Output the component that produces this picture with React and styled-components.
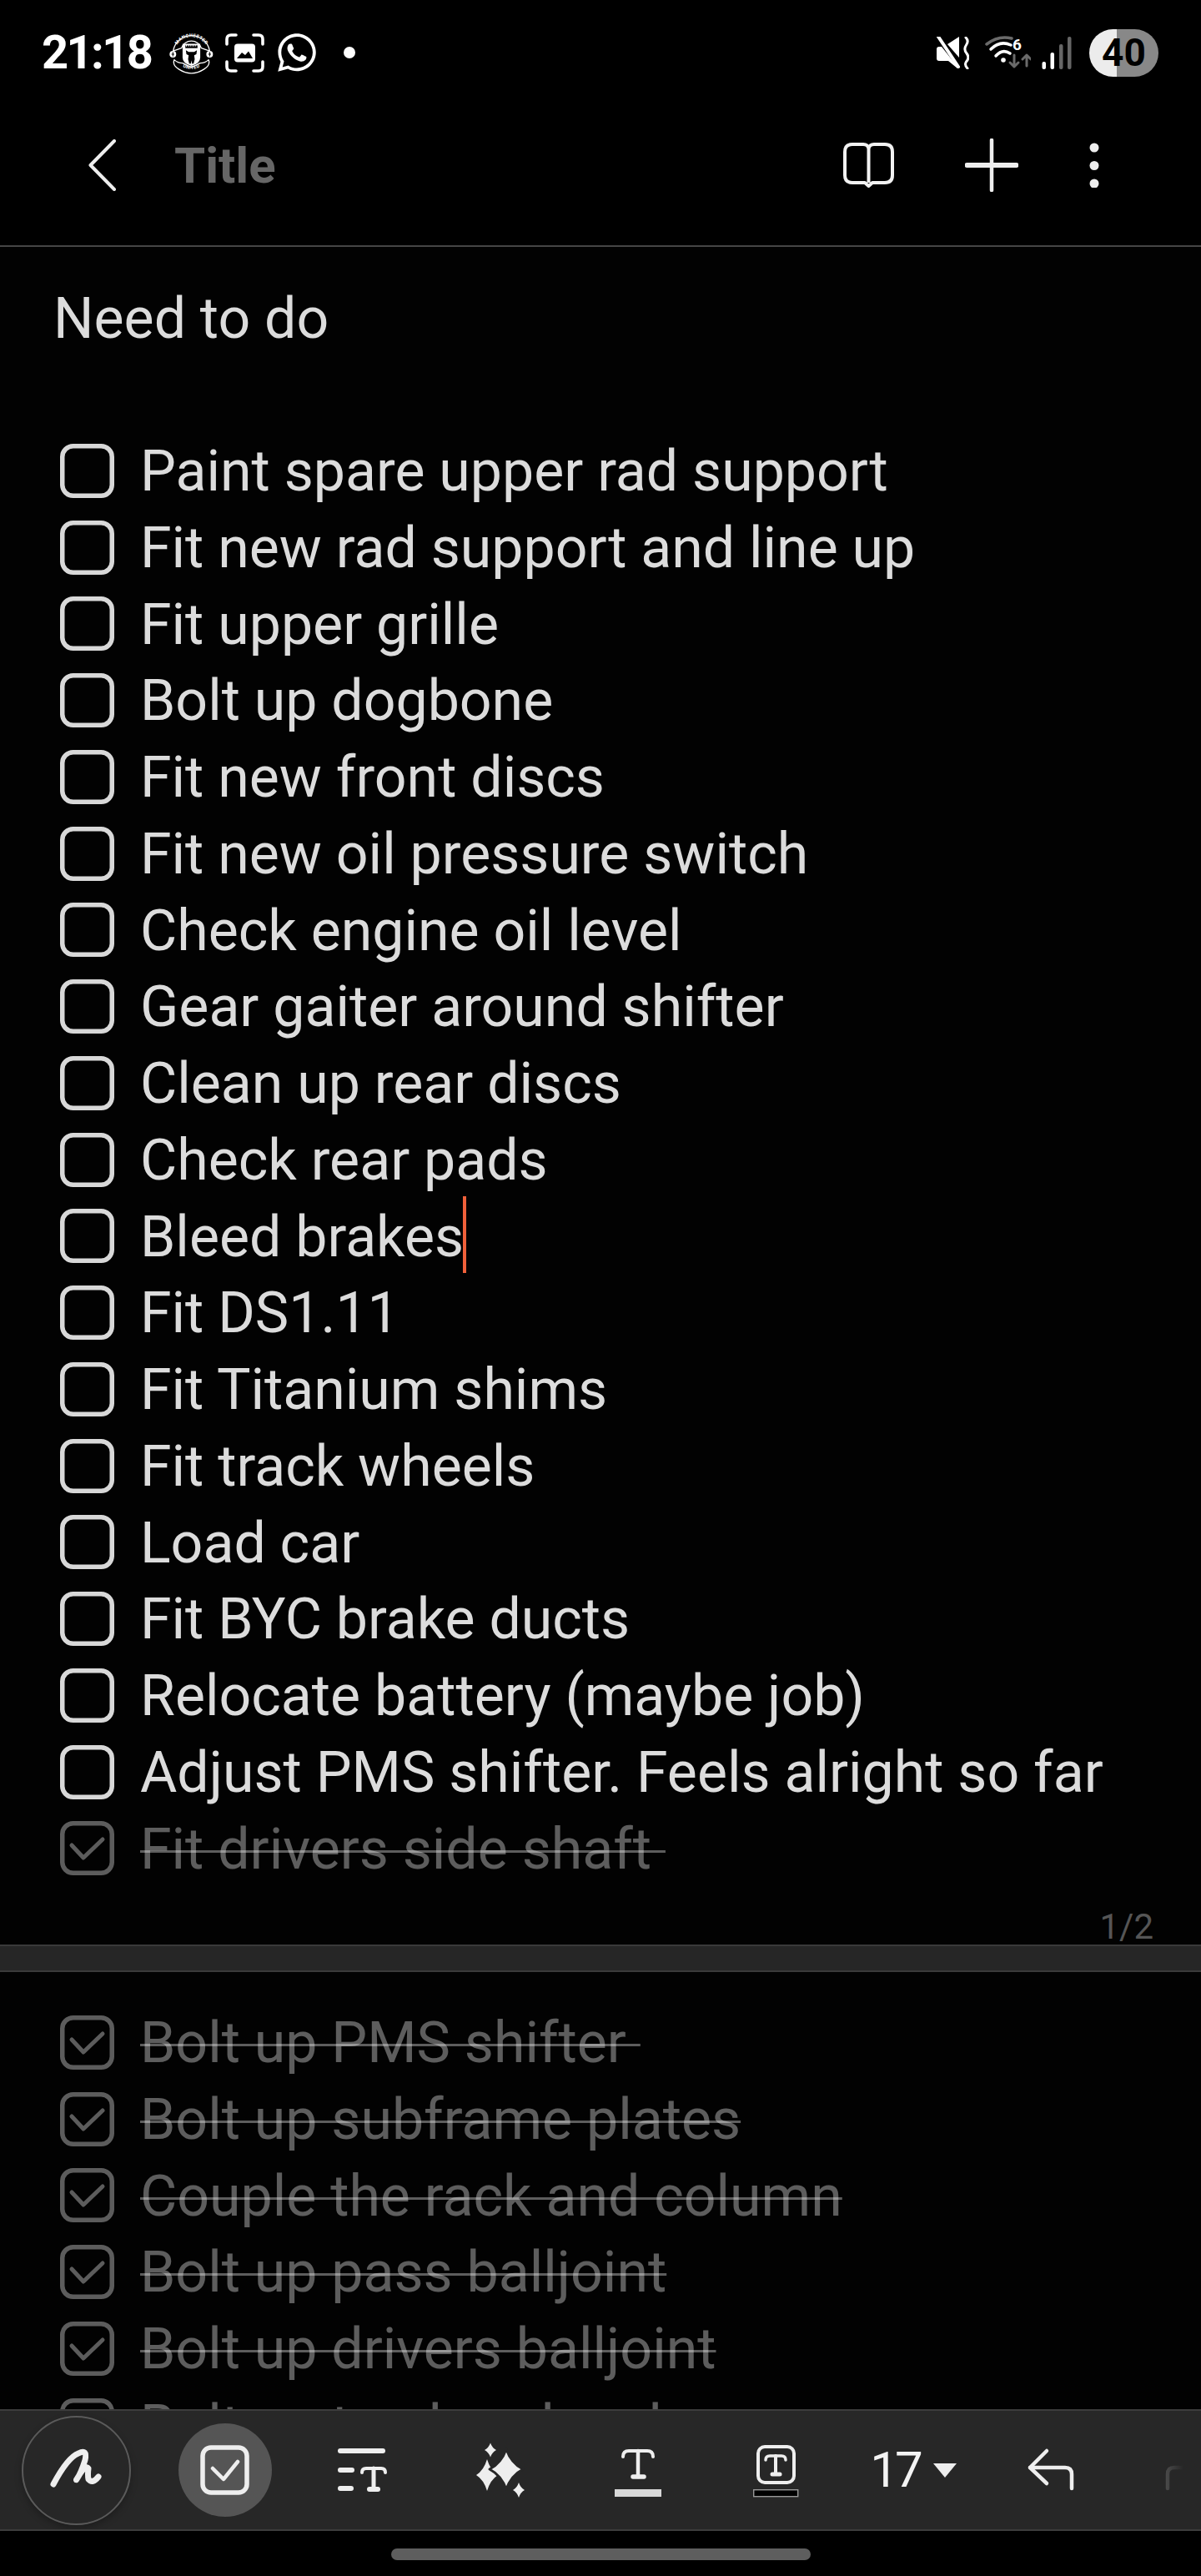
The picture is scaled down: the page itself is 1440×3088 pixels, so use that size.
import React from "react";
import styled, { createGlobalStyle } from "styled-components";
import { FaWhatsapp } from "react-icons/fa";

const Global = createGlobalStyle`
  html, body { margin: 0; padding: 0; background: #000; }
  * { box-sizing: border-box; }
`;

const Phone = styled.div`
  width: 1440px;
  height: 3088px;
  background: #000;
  display: flex;
  flex-direction: column;
  overflow: hidden;
  font-family: Roboto, "Liberation Sans", sans-serif;
`;

const StatusBar = styled.div`
  height: 126px;
  flex: none;
  display: flex;
  align-items: center;
  padding: 0 51px 0 50px;
  color: #fff;
`;
const Time = styled.div`
  width: 139px;
  font-size: 56px;
  letter-spacing: -2.6px;
  line-height: 1;
  font-weight: 700;
`;
const StatusLeft = styled.div`
  display: flex;
  align-items: center;
  gap: 14px;
  flex: 1;
`;
const WhatsApp = styled(FaWhatsapp)`
  margin: 0 -1px;
  color: #fff;
`;
const StatusDot = styled.div`
  width: 14px;
  height: 14px;
  border-radius: 50%;
  background: #fff;
  margin-left: 17px;
`;
const StatusRight = styled.div`
  display: flex;
  align-items: center;
`;
const Battery = styled.div`
  width: 83px;
  height: 57px;
  margin-left: 20px;
  border-radius: 29px;
  background: linear-gradient(90deg, #ececec 0 33px, #888 33px 100%);
  color: #000;
  font-size: 46px;
  font-weight: 700;
  line-height: 57px;
  text-align: center;
`;

const Header = styled.div`
  height: 170px;
  flex: none;
  display: flex;
  align-items: center;
  padding: 0 122px 24px 106px;
  border-bottom: 2px solid #454545;
`;
const Title = styled.div`
  flex: 1;
  margin-left: 70px;
  padding-top: 2px;
  font-size: 60px;
  line-height: 1;
  font-weight: 700;
  color: #666;
`;
const HeaderActions = styled.div`
  display: flex;
  align-items: center;
  gap: 85px;
`;

const Editor = styled.div`
  flex: 1;
  min-height: 0;
  overflow: hidden;
  background: #020202;
`;
const Page = styled.div`
  height: ${(p) => (p.$first ? "2035px" : "auto")};
  padding: ${(p) => (p.$first ? "39px" : "38.6px")} 0 0 62px;
  display: flex;
  flex-direction: column;
`;
const Line = styled.div`
  height: 91.76px;
  padding: 1.5px 0 0 2px;
  font-size: 68px;
  line-height: 91.76px;
  color: #dcdcdc;
  white-space: pre;
`;
const Row = styled.div`
  height: 91.76px;
  display: flex;
  align-items: center;
  padding-left: 10px;
`;
const BoxIcon = styled.svg`
  width: 65px;
  height: 65px;
  flex: none;
  margin-right: 31px;
  color: ${(p) => (p.$done ? "#5c5c5c" : "#d8d8d8")};
`;
const RowText = styled.span`
  padding-top: 3px;
  font-size: 68px;
  line-height: 91.76px;
  white-space: pre;
  color: ${(p) => (p.$done ? "rgba(255,255,255,.36)" : "#dcdcdc")};
  text-decoration: ${(p) => (p.$done ? "line-through" : "none")};
  text-decoration-thickness: 3px;
`;
const Caret = styled.span`
  position: relative;
  display: inline-block;
  width: 0;
  height: 0;
  &::after {
    content: "";
    position: absolute;
    left: -1px;
    top: -72px;
    width: 4px;
    height: 92px;
    background: #f0603a;
  }
`;
const PageNum = styled.div`
  margin-top: auto;
  align-self: flex-end;
  padding-right: 57px;
  font-size: 42px;
  line-height: 42px;
  color: #555;
`;
const PageBreak = styled.div`
  height: 33px;
  background: #262626;
  border-top: 2px solid #3a3a3a;
  border-bottom: 2px solid #3a3a3a;
`;

const Toolbar = styled.div`
  position: relative;
  height: 146px;
  flex: none;
  display: flex;
  align-items: center;
  padding-left: 8.5px;
  background: #272727;
  border-top: 2px solid #3c3c3c;
  border-bottom: 2px solid #3c3c3c;
  overflow: hidden;
  &::after {
    content: "";
    position: absolute;
    top: 0;
    bottom: 0;
    right: 0;
    width: 42px;
    background: linear-gradient(90deg, rgba(39, 39, 39, 0), #272727 50%);
  }
`;
const ToolSlot = styled.div`
  width: 165px;
  flex: none;
  display: flex;
  justify-content: center;
  align-items: center;
  margin-right: ${(p) => p.$after || 0}px;
  color: ${(p) => (p.$muted ? "#4a4a4a" : "#eee")};
`;
const PenCircle = styled.div`
  width: 131px;
  height: 131px;
  border-radius: 50%;
  border: 2px solid #5a5a5a;
  display: flex;
  align-items: center;
  justify-content: center;
  box-shadow: 0 4px 8px rgba(0, 0, 0, 0.25);
`;
const ActiveCircle = styled.div`
  width: 112px;
  height: 112px;
  border-radius: 50%;
  background: #555;
  display: flex;
  align-items: center;
  justify-content: center;
`;
const SizeLabel = styled.div`
  display: flex;
  align-items: center;
  gap: 16px;
  font-size: 60px;
  letter-spacing: -4px;
  line-height: 1;
  font-weight: 400;
  color: #f4f4f4;
`;
const HomeArea = styled.div`
  height: 54px;
  flex: none;
  display: flex;
  justify-content: center;
  padding-top: 21px;
`;
const HomeBar = styled.div`
  width: 503px;
  height: 14px;
  border-radius: 7px;
  background: #5e5e5e;
`;

const star = (cx, cy, rx, ry) => {
  const kx = rx * 0.3, ky = ry * 0.3;
  return `M${cx} ${cy - ry}Q${cx + kx} ${cy - ky} ${cx + rx} ${cy}Q${cx + kx} ${cy + ky} ${cx} ${cy + ry}Q${cx - kx} ${cy + ky} ${cx - rx} ${cy}Q${cx - kx} ${cy - ky} ${cx} ${cy - ry}Z`;
};

const Crest = () => (
  <svg width="53" height="52" viewBox="0 0 160 156">
    <defs>
      <path id="crestTop" d="M22 66A60 60 0 0 1 138 66" />
      <path id="crestBottom" d="M30 118Q80 158 130 118" />
    </defs>
    <path d="M14 72A67 67 0 0 1 146 72L116 62A38 38 0 0 0 44 62Z" fill="#000" stroke="#fff" strokeWidth="4" strokeLinejoin="round" />
    <text fontSize="17" fontWeight="700" fill="#fff" fontFamily="Roboto, sans-serif" letterSpacing="1">
      <textPath href="#crestTop" startOffset="50%" textAnchor="middle">MANCHESTER</textPath>
    </text>
    <path d="M48 46H112V96Q112 118 80 126Q48 118 48 96Z" fill="#fff" />
    <path d="M58 52H102V62H58Z" fill="#000" />
    <path d="M62 49V56M70 49V56M78 49V56M86 49V56M94 49V56" stroke="#fff" strokeWidth="3" />
    <path d="M60 70L70 76H90L100 70L98 84L90 88L92 102L88 118H82L80 106L78 118H72L68 102L70 88L62 84Z" fill="#000" />
    <circle cx="13" cy="84" r="12" fill="#fff" />
    <circle cx="146" cy="84" r="12" fill="#fff" />
    <path d="M13 76V92M146 76V92M8 84H18M141 84H151" stroke="#000" strokeWidth="3" />
    <path d="M18 104Q30 116 48 116L80 132L112 116Q130 116 142 104Q150 124 126 138Q80 168 34 138Q10 124 18 104Z" fill="#000" stroke="#fff" strokeWidth="4" strokeLinejoin="round" />
    <text fontSize="17" fontWeight="700" fill="#fff" fontFamily="Roboto, sans-serif" letterSpacing="1">
      <textPath href="#crestBottom" startOffset="50%" textAnchor="middle">UNITED</textPath>
    </text>
  </svg>
);

const ShotIcon = () => (
  <svg width="47" height="47" viewBox="0 0 47 47" fill="none">
    <path d="M2 13V7Q2 2 7 2H13M34 2H40Q45 2 45 7V13M45 34V40Q45 45 40 45H34M13 45H7Q2 45 2 40V34" stroke="#fff" strokeWidth="3.6" strokeLinecap="round" />
    <rect x="11" y="12.5" width="25" height="22" rx="4" fill="#fff" />
    <path d="M14 30L20 23L24 26L28 21.5L33 30Z" fill="#000" />
  </svg>
);

const MuteIcon = () => (
  <svg width="40" height="39" viewBox="0 0 40 39" style={{ flex: "none" }}>
    <path d="M1 15Q1 12 4 12H7L26 36V38L15 29H4Q1 29 1 26Z" fill="#fff" />
    <path d="M14 9L28 0V25Z" fill="#fff" />
    <path d="M5 0L29 36" stroke="#000" strokeWidth="2.5" />
    <path d="M3 0L27 36" stroke="#fff" strokeWidth="4" strokeLinecap="round" />
    <path d="M36 1Q40 5 36.5 10Q33 15 37 20Q41 25 36.5 30Q34 34 38 38" fill="none" stroke="#fff" strokeWidth="3" strokeLinecap="round" />
  </svg>
);

const WifiIcon = () => (
  <svg width="55" height="40" viewBox="0 0 55 40" fill="none" style={{ flex: "none", marginLeft: 19 }}>
    <path d="M2 10Q16 -1 32 3" stroke="#6a6a6a" strokeWidth="3.5" strokeLinecap="round" />
    <path d="M7 16Q18 5 31 11" stroke="#fff" strokeWidth="3.5" strokeLinecap="round" />
    <path d="M13 24Q21 15 30 21" stroke="#fff" strokeWidth="3.5" strokeLinecap="round" />
    <circle cx="22" cy="29" r="2.8" fill="#fff" />
    <text x="33" y="17" fontSize="19" fontWeight="700" fill="#fff" fontFamily="Roboto, sans-serif">6</text>
    <path d="M35 23V37M30 32L35 37L40 32" stroke="#6a6a6a" strokeWidth="3" strokeLinecap="round" strokeLinejoin="round" />
    <path d="M50 36V23M45 28L50 23L55 28" stroke="#6a6a6a" strokeWidth="3" strokeLinecap="round" strokeLinejoin="round" />
  </svg>
);

const SignalIcon = () => (
  <svg width="38" height="39" viewBox="0 0 38 39" style={{ flex: "none", marginLeft: 12 }}>
    <rect x="1.5" y="30" width="4.5" height="9" rx="2" fill="#fff" />
    <rect x="11.5" y="19" width="4.5" height="20" rx="2" fill="#fff" />
    <rect x="22" y="9" width="4.5" height="30" rx="2" fill="#666" />
    <rect x="32" y="0" width="4.5" height="39" rx="2" fill="#666" />
  </svg>
);

const BackIcon = () => (
  <svg width="33" height="62" viewBox="0 0 33 62" fill="none">
    <path d="M31 2L2.5 31L31 60" stroke="#eee" strokeWidth="4" strokeLinecap="round" strokeLinejoin="round" />
  </svg>
);
const BookIcon = () => (
  <svg width="61" height="54" viewBox="0 0 61 54" fill="none">
    <path d="M30.5 7Q29.5 2 24 2H11Q2 2 2 11V39Q2 48 11 48H26L30.5 52L35 48H50Q59 48 59 39V11Q59 2 50 2H37Q31.5 2 30.5 7V48" stroke="#f2f2f2" strokeWidth="4" strokeLinejoin="round" />
  </svg>
);
const PlusIcon = () => (
  <svg width="64" height="64" viewBox="0 0 64 64" fill="none">
    <path d="M32 2V62" stroke="#eee" strokeWidth="4.5" strokeLinecap="round" />
    <path d="M2.5 32H61.5" stroke="#eee" strokeWidth="6" strokeLinecap="round" />
  </svg>
);
const MoreIcon = () => (
  <svg width="12" height="54" viewBox="0 0 12 54">
    <ellipse cx="6" cy="6" rx="5.5" ry="5.5" fill="#eee" />
    <ellipse cx="6" cy="27.5" rx="5.5" ry="5.5" fill="#eee" />
    <ellipse cx="6" cy="49" rx="5.5" ry="5.5" fill="#eee" />
  </svg>
);

const Checkbox = ({ done }) => (
  <BoxIcon $done={done} viewBox="0 0 65 65" fill="none">
    <rect x="2.75" y="2.75" width="59.5" height="59.5" rx="13" stroke="currentColor" strokeWidth="5.5" />
    {done && <path d="M14 29L28 44L51 22" stroke="currentColor" strokeWidth="5" strokeLinecap="round" strokeLinejoin="round" />}
  </BoxIcon>
);

const ToolIcon = ({ children }) => (
  <svg width="80" height="80" viewBox="0 0 80 80" fill="none" stroke="currentColor" strokeLinecap="round" strokeLinejoin="round">
    {children}
  </svg>
);

const todo = [
  "Paint spare upper rad support",
  "Fit new rad support and line up",
  "Fit upper grille",
  "Bolt up dogbone",
  "Fit new front discs",
  "Fit new oil pressure switch",
  "Check engine oil level",
  "Gear gaiter around shifter",
  "Clean up rear discs",
  "Check rear pads",
  "Bleed brakes",
  "Fit DS1.11",
  "Fit Titanium shims",
  "Fit track wheels",
  "Load car",
  "Fit BYC brake ducts",
  "Relocate battery (maybe job)",
  "Adjust PMS shifter. Feels alright so far",
];
const donePageTwo = [
  "Bolt up PMS shifter ",
  "Bolt up subframe plates",
  "Couple the rack and column",
  "Bolt up pass balljoint",
  "Bolt up drivers balljoint",
  "Bolt up track rod end",
];

export default function App() {
  return (
    <Phone>
      <Global />
      <StatusBar>
        <StatusLeft>
          <Time>21:18</Time>
          <Crest />
          <ShotIcon />
          <WhatsApp size={52} />
          <StatusDot />
        </StatusLeft>
        <StatusRight>
          <MuteIcon />
          <WifiIcon />
          <SignalIcon />
          <Battery>40</Battery>
        </StatusRight>
      </StatusBar>

      <Header>
        <BackIcon />
        <Title>Title</Title>
        <HeaderActions>
          <BookIcon />
          <PlusIcon />
          <MoreIcon />
        </HeaderActions>
      </Header>

      <Editor>
        <Page $first>
          <Line>Need to do</Line>
          <Line> </Line>
          {todo.map((t) => (
            <Row key={t}>
              <Checkbox />
              <RowText>
                {t}
                {t === "Bleed brakes" && <Caret />}
              </RowText>
            </Row>
          ))}
          <Row>
            <Checkbox done />
            <RowText $done>{"Fit drivers side shaft "}</RowText>
          </Row>
          <PageNum>1/2</PageNum>
        </Page>
        <PageBreak />
        <Page>
          {donePageTwo.map((t) => (
            <Row key={t}>
              <Checkbox done />
              <RowText $done>{t}</RowText>
            </Row>
          ))}
        </Page>
      </Editor>

      <Toolbar>
        <ToolSlot $after={14}>
          <PenCircle>
            <ToolIcon>
              <path d="M13 57Q30 25 43 20Q54 14 51 28Q46 44 41 51Q39 54 44 46Q52 33 55 38Q54 46 55 51Q60 57 67 48" strokeWidth="7" />
            </ToolIcon>
          </PenCircle>
        </ToolSlot>
        <ToolSlot>
          <ActiveCircle>
            <ToolIcon>
              <rect x="13" y="13" width="53" height="54" rx="10" strokeWidth="5.5" />
              <path d="M25 38L38 51L55 30" strokeWidth="4.5" />
            </ToolIcon>
          </ActiveCircle>
        </ToolSlot>
        <ToolSlot>
          <ToolIcon>
            <path d="M13 17H64" strokeWidth="6" />
            <path d="M13 40H27M13 62H26" strokeWidth="6" />
            <path d="M39 43Q39 38 44 38H62Q67 38 67 43" strokeWidth="4" />
            <path d="M53 38V63" strokeWidth="5" />
            <path d="M48 63H58" strokeWidth="6" />
          </ToolIcon>
        </ToolSlot>
        <ToolSlot>
          <ToolIcon>
            <path d={star(28, 16, 7, 8.5)} fill="currentColor" stroke="none" />
            <path d={star(24, 46, 13, 19)} fill="currentColor" stroke="none" />
            <path d={star(47, 39, 20, 24)} fill="currentColor" stroke="#272727" strokeWidth="3" />
            <path d={star(62, 64, 7, 9)} fill="currentColor" stroke="none" />
          </ToolIcon>
        </ToolSlot>
        <ToolSlot>
          <ToolIcon>
            <path d="M22 24Q22 17 29 17H51Q58 17 58 24" strokeWidth="4" />
            <path d="M40 17V48" strokeWidth="4.5" />
            <path d="M34 48H47" strokeWidth="5.5" />
            <rect x="12" y="63" width="56" height="9" fill="#d8d8d8" stroke="none" />
          </ToolIcon>
        </ToolSlot>
        <ToolSlot>
          <ToolIcon>
            <rect x="19" y="12" width="43" height="43" rx="8" strokeWidth="4" />
            <path d="M28 28Q28 23 33 23H47Q52 23 52 28" strokeWidth="3.5" />
            <path d="M40 23V45" strokeWidth="4" />
            <path d="M36 45H45" strokeWidth="5" />
            <rect x="13.7" y="63.7" width="53" height="8" fill="#000" stroke="#999" strokeWidth="1.4" strokeLinecap="butt" strokeLinejoin="miter" />
          </ToolIcon>
        </ToolSlot>
        <ToolSlot>
          <SizeLabel>
            17
            <svg width="28" height="17" viewBox="0 0 28 17">
              <path d="M0 0H28L14 17Z" fill="#eee" />
            </svg>
          </SizeLabel>
        </ToolSlot>
        <ToolSlot>
          <ToolIcon>
            <path d="M35 17L15 37L35 56" strokeWidth="4.5" />
            <path d="M15 37H57Q65 37 65 45V62" strokeWidth="4.5" />
          </ToolIcon>
        </ToolSlot>
        <ToolSlot $muted>
          <ToolIcon>
            <path d="M15 62V45Q15 37 23 37H65" strokeWidth="4.5" />
            <path d="M45 17L65 37L45 56" strokeWidth="4.5" />
          </ToolIcon>
        </ToolSlot>
      </Toolbar>

      <HomeArea>
        <HomeBar />
      </HomeArea>
    </Phone>
  );
}
